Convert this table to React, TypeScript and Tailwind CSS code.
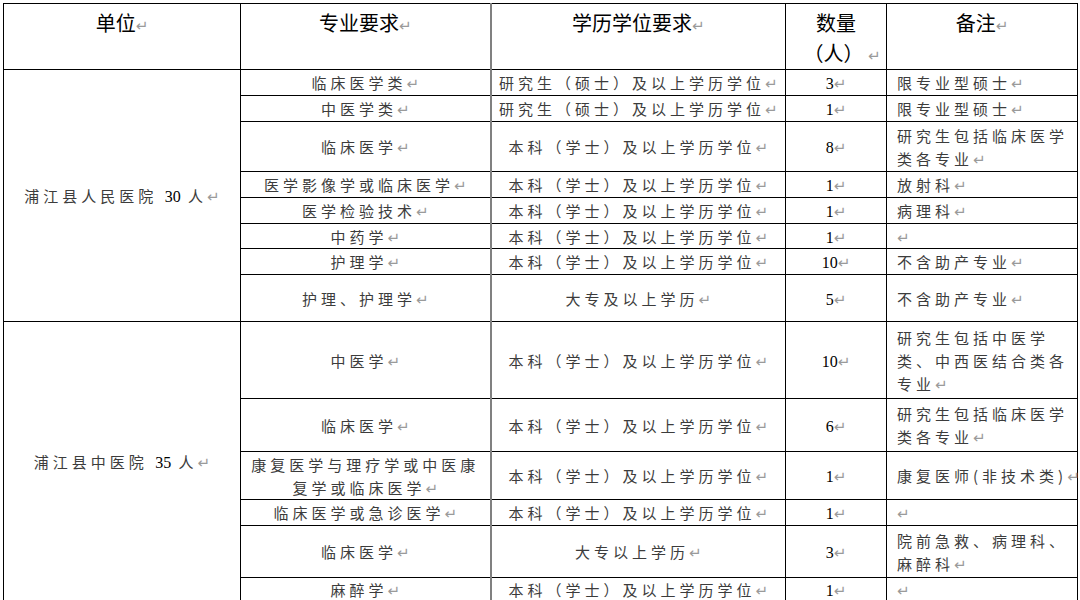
import React from "react";

type Row = {
  major: string[];
  edu: string;
  n: string;
  note: string[];
  h: number;
};

const groups: { unit: string; count: string; rows: Row[] }[] = [
  {
    unit: "浦江县人民医院",
    count: "30",
    rows: [
      { major: ["临床医学类"], edu: "研究生（硕士）及以上学历学位", n: "3", note: ["限专业型硕士"], h: 26 },
      { major: ["中医学类"], edu: "研究生（硕士）及以上学历学位", n: "1", note: ["限专业型硕士"], h: 26 },
      { major: ["临床医学"], edu: "本科（学士）及以上学历学位", n: "8", note: ["研究生包括临床医学", "类各专业"], h: 50 },
      { major: ["医学影像学或临床医学"], edu: "本科（学士）及以上学历学位", n: "1", note: ["放射科"], h: 26 },
      { major: ["医学检验技术"], edu: "本科（学士）及以上学历学位", n: "1", note: ["病理科"], h: 26 },
      { major: ["中药学"], edu: "本科（学士）及以上学历学位", n: "1", note: [""], h: 25 },
      { major: ["护理学"], edu: "本科（学士）及以上学历学位", n: "10", note: ["不含助产专业"], h: 26 },
      { major: ["护理、护理学"], edu: "大专及以上学历", n: "5", note: ["不含助产专业"], h: 47 },
    ],
  },
  {
    unit: "浦江县中医院",
    count: "35",
    rows: [
      { major: ["中医学"], edu: "本科（学士）及以上学历学位", n: "10", note: ["研究生包括中医学", "类、中西医结合类各", "专业"], h: 77 },
      { major: ["临床医学"], edu: "本科（学士）及以上学历学位", n: "6", note: ["研究生包括临床医学", "类各专业"], h: 53 },
      { major: ["康复医学与理疗学或中医康", "复学或临床医学"], edu: "本科（学士）及以上学历学位", n: "1", note: ["康复医师(非技术类)"], h: 48 },
      { major: ["临床医学或急诊医学"], edu: "本科（学士）及以上学历学位", n: "1", note: [""], h: 26 },
      { major: ["临床医学"], edu: "大专以上学历", n: "3", note: ["院前急救、病理科、", "麻醉科"], h: 52 },
      { major: ["麻醉学"], edu: "本科（学士）及以上学历学位", n: "1", note: [""], h: 22 },
    ],
  },
];

// paragraph mark like in Word
const Mark = () => (
  <span className="font-['DejaVu_Sans',sans-serif] text-[15px] leading-none tracking-normal text-[#9a9a9a]">↵</span>
);

const Num = ({ v }: { v: string }) => (
  <span className="font-['Liberation_Serif',serif] text-[16px] leading-none tracking-normal text-black">{v}</span>
);

const Lines = ({ lines }: { lines: string[] }) => (
  <>
    {lines.map((l, i) => (
      <div key={i}>
        {l}
        {i === lines.length - 1 && <Mark />}
      </div>
    ))}
  </>
);

const td = "border border-black p-0 align-middle";

export default function App() {
  return (
    <div className="w-[1080px] h-[600px] bg-white overflow-hidden pl-[3px] pt-[3px]">
      <table className="table-fixed border-collapse w-[1075px] font-['Noto_Sans_CJK_SC',sans-serif] text-[15px] leading-[23px] text-[#3c3c3c]">
        <colgroup>
          <col className="w-[237px]" />
          <col className="w-[250px]" />
          <col className="w-[295px]" />
          <col className="w-[101px]" />
          <col />
        </colgroup>
        <thead>
          <tr className="h-[66px] text-[20px] leading-[30px] text-black">
            <th className="border border-black p-0 pt-[4px] align-top font-normal">
              单位<Mark />
            </th>
            <th className="border border-black p-0 pt-[4px] align-top font-normal">
              专业要求<Mark />
            </th>
            <th className="border border-black border-l-2 border-l-[#808080] p-0 pt-[4px] align-top font-normal">
              学历学位要求<Mark />
            </th>
            <th className="border border-black p-0 pt-[4px] align-top font-normal">
              <div>数量</div>
              <div className="pl-[12px]">
                （人） <Mark />
              </div>
            </th>
            <th className="border border-black p-0 pt-[4px] align-top font-normal">
              备注<Mark />
            </th>
          </tr>
        </thead>
        <tbody>
          {groups.map((g) =>
            g.rows.map((r, i) => (
              <tr key={g.unit + i} style={{ height: r.h }}>
                {i === 0 && (
                  <td rowSpan={g.rows.length} className={`${td} text-center tracking-[4px]`}>
                    {g.unit}{" "}
                    <Num v={g.count} /> 人<Mark />
                  </td>
                )}
                <td className={`${td} text-center tracking-[4px]`}>
                  <Lines lines={r.major} />
                </td>
                <td className={`${td} border-l-2 border-l-[#808080] text-center tracking-[4px]`}>
                  {r.edu}
                  <Mark />
                </td>
                <td className={`${td} text-center`}>
                  <Num v={r.n} />
                  <Mark />
                </td>
                <td className={`${td} pl-[10px] text-left tracking-[4px] whitespace-nowrap`}>
                  <Lines lines={r.note} />
                </td>
              </tr>
            ))
          )}
        </tbody>
      </table>
    </div>
  );
}
